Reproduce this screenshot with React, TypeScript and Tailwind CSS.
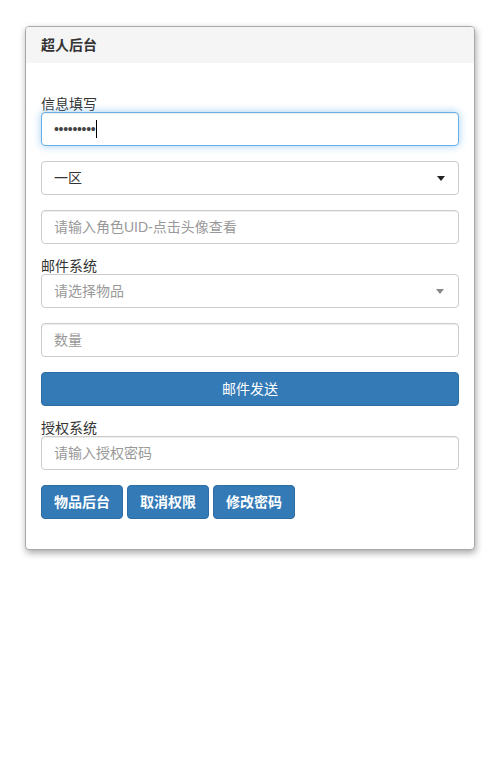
import React from 'react';

const font = { fontFamily: '"Liberation Sans", "Noto Sans CJK SC", sans-serif' };

function Caret({ light }: { light?: boolean }) {
  return (
    <span
      className={`block w-0 h-0 border-x-[4px] border-x-transparent border-t-[5px] ${
        light ? 'border-t-[#888]' : 'border-t-[#222]'
      }`}
    />
  );
}

function TextBox({ placeholder }: { placeholder: string }) {
  return (
    <div className="h-[34px] w-full rounded-[4px] border border-[#ccc] bg-white px-[12px] flex items-center text-[14px] text-[#999] shadow-[inset_0_1px_1px_rgba(0,0,0,0.075)]">
      {placeholder}
    </div>
  );
}

export default function App() {
  return (
    <div className="min-h-screen bg-white pt-[26px] pl-[25px] text-[#333]" style={font}>
      <div className="w-[450px] rounded-[4px] border border-[#a9a9a9] bg-white shadow-[1px_3px_7px_rgba(0,0,0,0.35)] overflow-hidden">
        {/* Heading */}
        <div className="h-[36px] px-[15px] bg-[#f5f5f5] flex items-center text-[14px] font-bold text-[#333]">
          超人后台
        </div>

        {/* Body */}
        <div className="px-[15px] pt-[34px] pb-[30px] flex flex-col">
          <label className="text-[14px] leading-[15px] h-[15px]">信息填写</label>
          <div className="h-[34px] w-full rounded-[4px] border border-[#66afe9] bg-white px-[12px] flex items-center text-[14px] text-[#555] shadow-[inset_0_1px_1px_rgba(0,0,0,0.075),0_0_8px_rgba(102,175,233,0.6)]">
            <span className="tracking-[-0.3px] text-[#444]">•••••••••</span>
            <span className="ml-px w-px h-[18px] bg-black" />
          </div>

          <div className="mt-[15px] h-[34px] w-full rounded-[4px] border border-[#ccc] bg-white pl-[12px] pr-[13px] flex items-center justify-between text-[14px] text-[#333]">
            <span>一区</span>
            <Caret />
          </div>

          <div className="mt-[15px]">
            <TextBox placeholder="请输入角色UID-点击头像查看" />
          </div>

          <label className="mt-[15px] text-[14px] leading-[15px] h-[15px]">邮件系统</label>
          <div className="h-[34px] w-full rounded-[4px] border border-[#ccc] bg-white pl-[12px] pr-[14px] flex items-center justify-between text-[14px] text-[#999]">
            <span>请选择物品</span>
            <Caret light />
          </div>

          <div className="mt-[15px]">
            <TextBox placeholder="数量" />
          </div>

          <button className="mt-[15px] h-[34px] w-full rounded-[4px] border border-[#2e6da4] bg-[#337ab7] text-[14px] text-white">
            邮件发送
          </button>

          <label className="mt-[15px] text-[14px] leading-[15px] h-[15px]">授权系统</label>
          <TextBox placeholder="请输入授权密码" />

          <div className="mt-[15px] flex gap-[4px]">
            {['物品后台', '取消权限', '修改密码'].map((t) => (
              <button
                key={t}
                className="h-[34px] px-[12px] rounded-[4px] border border-[#2e6da4] bg-[#337ab7] text-[14px] font-bold text-white"
              >
                {t}
              </button>
            ))}
          </div>
        </div>
      </div>
    </div>
  );
}
